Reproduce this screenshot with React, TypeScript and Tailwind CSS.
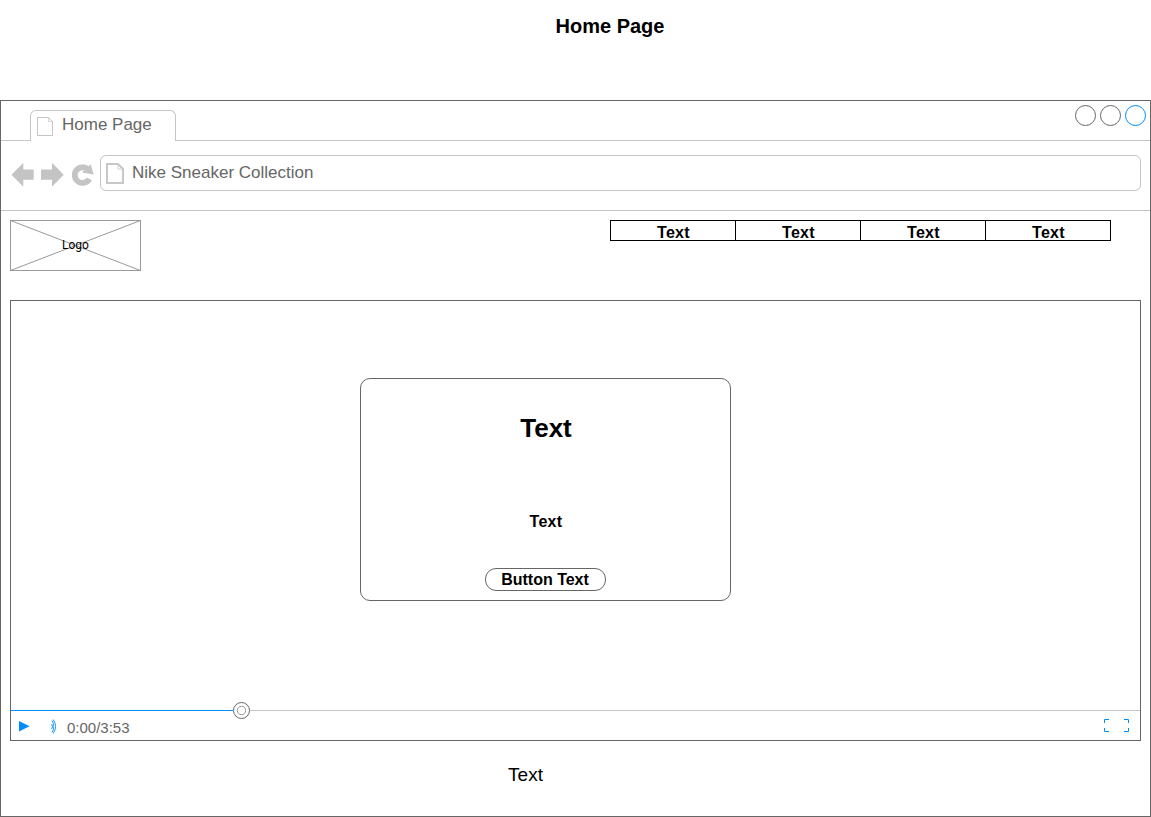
import React from "react";

const navItems = ["Text", "Text", "Text", "Text"];

function PageIcon({ className, bold = false }: { className?: string; bold?: boolean }) {
  return bold ? (
    <svg className={className} width="18" height="21" viewBox="0 0 18 21" fill="none" stroke="#c8c8c8">
      <path d="M1 1H12L17 6V20H1Z" strokeWidth="2" />
      <path d="M12 1V6H17" strokeWidth="0.8" />
    </svg>
  ) : (
    <svg className={className} width="16" height="19" viewBox="0 0 16 19" fill="none" stroke="#c4c4c4">
      <path d="M0.5 0.5H11.5L15.5 4.5V18.5H0.5Z" />
      <path d="M11.5 0.5V4.5H15.5" strokeWidth="0.7" />
    </svg>
  );
}

function TabBar() {
  return (
    <div className="flex h-10 shrink-0">
      <div className="w-[29px] border-b border-[#c4c4c4]" />
      <div className="mt-[9px] flex h-[31px] w-[146px] rounded-t-[6px] border border-b-0 border-[#c4c4c4] pl-[6px]">
        <PageIcon className="mt-[6px] shrink-0" />
        <span className="ml-[9px] mt-[4px] whitespace-nowrap text-[17px] leading-5 text-[#666]">Home Page</span>
      </div>
      <div className="flex flex-1 items-start justify-end gap-1 border-b border-[#c4c4c4] pr-[4px] pt-[4px]">
        <span className="size-[21px] rounded-full border border-[#666]" />
        <span className="size-[21px] rounded-full border border-[#666]" />
        <span className="size-[21px] rounded-full border border-[#008cff]" />
      </div>
    </div>
  );
}

function AddressBar() {
  return (
    <div className="flex h-[70px] shrink-0 border-b border-[#c4c4c4] pl-[10px] pr-[9px] pt-[14px]">
      <svg className="mt-[7px] shrink-0" width="83" height="26" viewBox="0 0 83 26">
        <path d="M0.5 12.7L12.3 0.7V7.5H22.7V17.8H12.3V24.7Z" fill="#c4c4c4" />
        <path d="M52.7 12.7L41 0.7V7.5H30V17.8H41V24.7Z" fill="#c4c4c4" />
        <path d="M77 7.5A7.8 7.8 0 1 0 78.4 16.8" fill="none" stroke="#c4c4c4" strokeWidth="5.8" />
        <path d="M79.7 2.2L82.7 12.5L71 10.5Z" fill="#c4c4c4" />
      </svg>
      <div className="ml-[6px] flex h-9 flex-1 rounded-[6px] border border-[#c4c4c4] pl-[5px]">
        <PageIcon bold className="mt-[7px] shrink-0" />
        <span className="ml-[8px] mt-[7px] text-[17px] leading-5 text-[#666]">Nike Sneaker Collection</span>
      </div>
    </div>
  );
}

function Header() {
  return (
    <header className="flex h-[89px] shrink-0 items-start justify-between pl-[9px] pr-[39px] pt-[9px]">
      <div className="grid h-[51px] w-[131px] place-items-center">
        <svg className="col-start-1 row-start-1" width="131" height="51" fill="none" stroke="#999">
          <rect x="0.5" y="0.5" width="130" height="50" />
          <path d="M0.5 0.5L130.5 50.5M130.5 0.5L0.5 50.5" />
        </svg>
        <span className="col-start-1 row-start-1 mb-[2px] font-[Roboto,sans-serif] text-[12px] leading-[14px] text-black">Logo</span>
      </div>
      <nav className="flex h-[21px] w-[501px] border-l border-black">
        {navItems.map((item, i) => (
          <a key={i} className="flex flex-1 justify-center border-y border-r border-black pl-[1px] text-[16px] font-bold leading-[23px] tracking-[0.3px]">
            {item}
          </a>
        ))}
      </nav>
    </header>
  );
}

function Player() {
  return (
    <section className="mx-[9px] flex h-[441px] shrink-0 flex-col border border-[#666]">
      <div className="flex h-[401px] shrink-0 pl-[349px] pt-[77px]">
        <div className="flex h-[223px] w-[371px] flex-col items-center rounded-[10px] border border-[#666] font-bold">
          <h2 className="mt-[34px] pl-[1px] text-[26px] leading-[30px]">Text</h2>
          <p className="mt-[69px] pl-[1px] text-[16px] leading-5 tracking-[0.3px]">Text</p>
          <button className="mt-[36px] flex h-[23px] w-[121px] justify-center rounded-[11px] border border-[#666] pr-[1px] text-[16px] leading-[21px]">
            Button Text
          </button>
        </div>
      </div>
      <svg className="mt-[-1px] shrink-0" width="1129" height="18" fill="none">
        <path d="M0 9.5H222" stroke="#008cff" />
        <path d="M239 9.5H1129" stroke="#c4c4c4" />
        <circle cx="230.5" cy="9.5" r="8" stroke="#666" />
        <circle cx="230.5" cy="9.5" r="4.2" stroke="#999" />
      </svg>
      <div className="flex h-[21px] items-start">
        <svg className="ml-[8px] mt-[2px]" width="11" height="11">
          <path d="M0 0L10.5 5.2L0 10.4Z" fill="#008cff" />
        </svg>
        <svg className="ml-[21px]" width="6" height="15" fill="none" stroke="#008cff" strokeWidth="0.9">
          <path d="M1 1.5Q3.4 4.5 2.2 7.5Q3.4 10.5 1 13.5M2.2 0.5Q7 7.5 2.2 14.5M0.7 5Q2 7.5 0.7 10" />
        </svg>
        <span className="ml-[10px] text-[15px] leading-[18px] text-[#666]">0:00/3:53</span>
        <svg className="ml-auto mr-[11px]" width="25" height="14" fill="none" stroke="#008cff">
          <path d="M5 0.5H0.5V4M20 0.5H24.5V4M0.5 9V12.5H5M24.5 9V12.5H20" />
        </svg>
      </div>
    </section>
  );
}

export default function App() {
  return (
    <main className="flex h-[817px] w-[1151px] flex-col overflow-hidden bg-white font-['Liberation_Sans',Arial,sans-serif] text-black">
      <h1 className="h-[100px] shrink-0 pl-[69px] pt-[14px] text-center text-[20px] font-bold leading-6">Home Page</h1>
      <div className="flex h-[717px] flex-col border border-[#666]">
        <TabBar />
        <AddressBar />
        <Header />
        <Player />
        <p className="mt-[22px] pr-[100px] text-center text-[19px] leading-6">Text</p>
      </div>
    </main>
  );
}
